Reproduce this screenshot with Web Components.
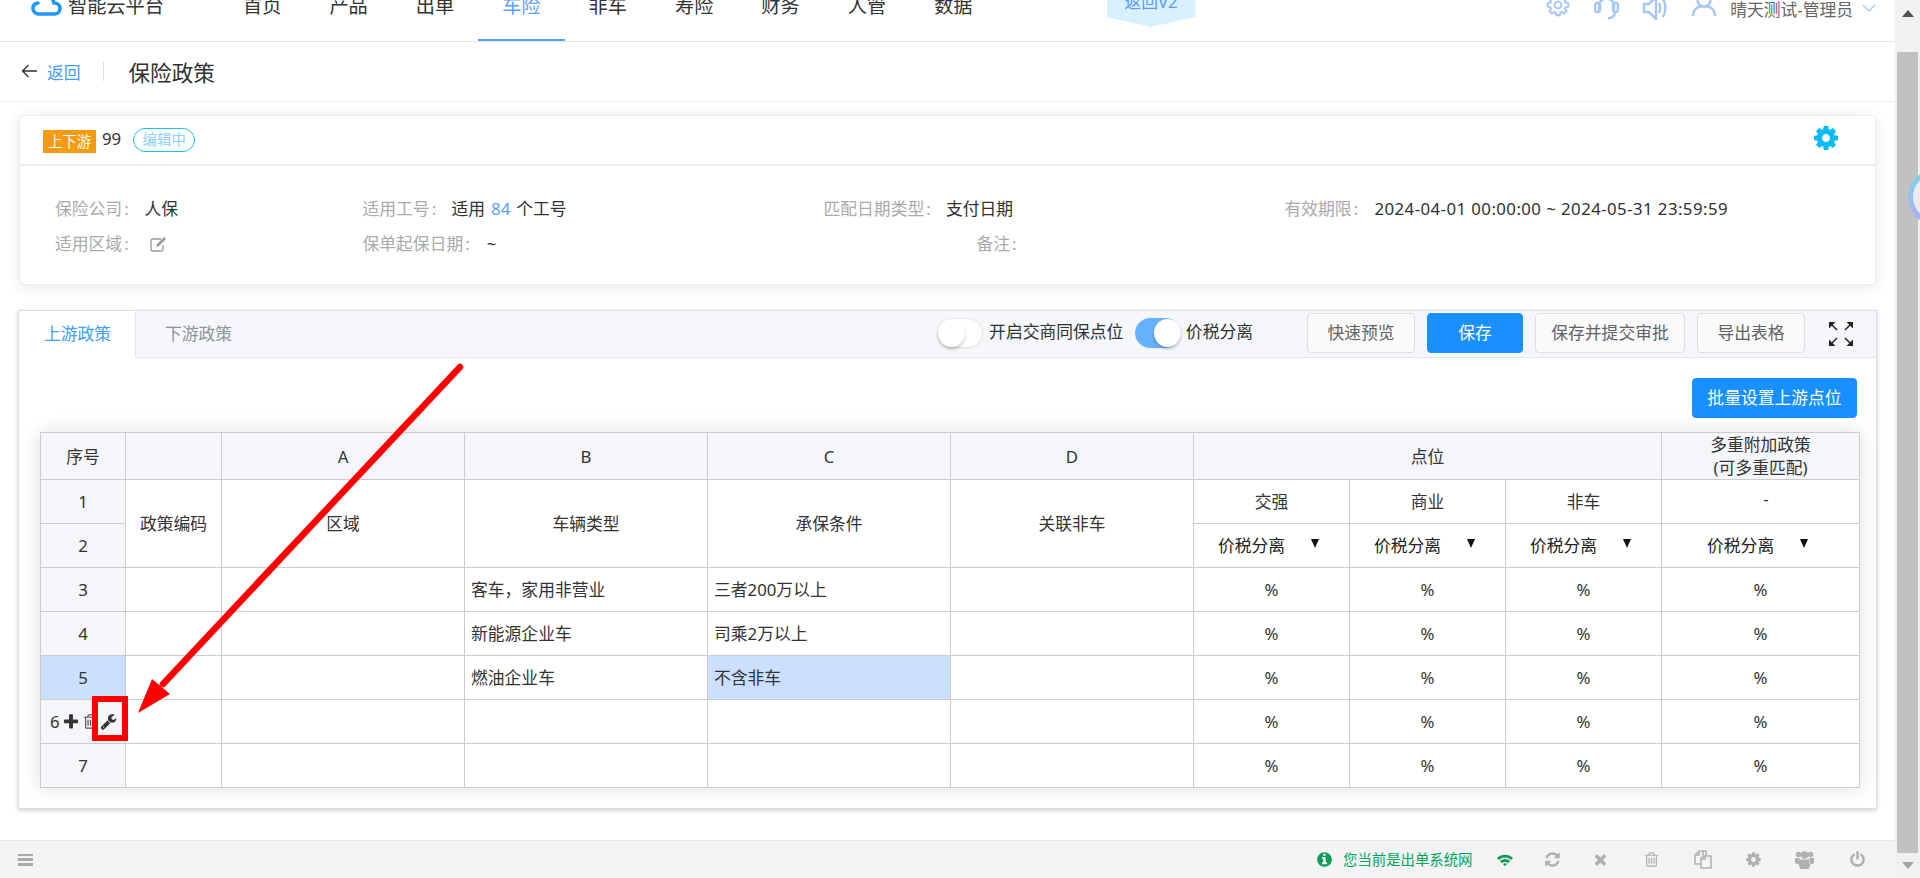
<!DOCTYPE html>
<html lang="zh"><head><meta charset="utf-8"><title>保险政策</title>
<style>
html,body{margin:0;padding:0;height:878px;overflow:hidden;background:#fff}
body{font:16.8px/1.4 "Noto Sans","Noto Sans CJK SC",sans-serif;color:#303133}
</style></head><body>
<app-shell>
  <top-nav></top-nav>
  <page-head title-text="保险政策"></page-head>
  <policy-card></policy-card>
  <tab-panel><policy-table></policy-table></tab-panel>
  <status-bar slot="foot"></status-bar>
</app-shell>
<fake-scroll></fake-scroll>
<red-note></red-note>
<script>
const FA={
wrench:"M448 1472q0-26-19-45t-45-19-45 19-19 45 19 45 45 19 45-19 19-45zm644-420l-682 682q-37 37-90 37-52 0-91-37l-106-108q-38-36-38-90 0-53 38-91l681-681q39 98 114.5 173.5t173.5 114.5zm634-435q0 39-23 106-47 134-164.5 217.5t-258.5 83.5q-185 0-316.5-131.5t-131.5-316.5 131.5-316.5 316.5-131.5q58 0 121.5 16.5t107.5 46.5q16 11 16 28t-16 28l-293 169v224l193 107q5-3 79-48.5t135.5-81 70.5-35.5q15 0 23.5 10t8.5 25z",
plus:"M1600 736v192q0 40-28 68t-68 28h-416v416q0 40-28 68t-68 28h-192q-40 0-68-28t-28-68v-416h-416q-40 0-68-28t-28-68v-192q0-40 28-68t68-28h416v-416q0-40 28-68t68-28h192q40 0 68 28t28 68v416h416q40 0 68 28t28 68z",
trash:"M704 736v576q0 14-9 23t-23 9h-64q-14 0-23-9t-9-23v-576q0-14 9-23t23-9h64q14 0 23 9t9 23zm256 0v576q0 14-9 23t-23 9h-64q-14 0-23-9t-9-23v-576q0-14 9-23t23-9h64q14 0 23 9t9 23zm256 0v576q0 14-9 23t-23 9h-64q-14 0-23-9t-9-23v-576q0-14 9-23t23-9h64q14 0 23 9t9 23zm128 724v-948h-896v948q0 22 7 40.5t14.5 27 10.5 8.5h832q3 0 10.5-8.5t14.5-27 7-40.5zm-672-1076h448l-48-117q-7-9-17-11h-317q-10 2-17 11zm928 32v64q0 14-9 23t-23 9h-96v948q0 83-47 143.5t-113 60.5h-832q-66 0-113-58.5t-47-141.5v-952h-96q-14 0-23-9t-9-23v-64q0-14 9-23t23-9h309l70-167q15-37 54-63t79-26h320q40 0 79 26t54 63l70 167h309q14 0 23 9t9 23z",
cog:"M1152 896q0-106-75-181t-181-75-181 75-75 181 75 181 181 75 181-75 75-181zm512-109v222q0 12-8 23t-20 13l-185 28q-19 54-39 91 35 50 107 138 10 12 10 25t-9 23q-27 37-99 108t-94 71q-12 0-26-9l-138-108q-44 23-91 38-16 136-29 186-7 28-36 28h-222q-14 0-24.5-8.5t-11.5-21.5l-28-184q-49-16-90-37l-141 107q-10 9-25 9-14 0-25-11-126-114-165-168-7-10-7-23 0-12 8-23 15-21 51-66.5t54-70.5q-27-50-41-99l-183-27q-13-2-21-12.5t-8-23.5v-222q0-12 8-23t19-13l186-28q14-46 39-92-40-57-107-138-10-12-10-24 0-10 9-23 26-36 98.5-107.5t94.5-71.5q13 0 26 10l138 107q44-23 91-38 16-136 29-186 7-28 36-28h222q14 0 24.5 8.5t11.5 21.5l28 184q49 16 90 37l142-107q9-9 24-9 13 0 25 10 129 119 165 170 7 8 7 22 0 12-8 23-15 21-51 66.5t-54 70.5q26 50 41 98l183 28q13 2 21 12.5t8 23.5z",
info:"M1152 1376v-160q0-14-9-23t-23-9h-96v-512q0-14-9-23t-23-9h-320q-14 0-23 9t-9 23v160q0 14 9 23t23 9h96v320h-96q-14 0-23 9t-9 23v160q0 14 9 23t23 9h448q14 0 23-9t9-23zm-128-896v-160q0-14-9-23t-23-9h-192q-14 0-23 9t-9 23v160q0 14 9 23t23 9h192q14 0 23-9t9-23zm640 416q0 209-103 385.5t-279.5 279.5-385.5 103-385.5-103-279.5-279.5-103-385.5 103-385.5 279.5-279.5 385.5-103 385.5 103 279.5 279.5 103 385.5z",
times:"M1490 1322q0 40-28 68l-136 136q-28 28-68 28t-68-28l-294-294-294 294q-28 28-68 28t-68-28l-136-136q-28-28-28-68t28-68l294-294-294-294q-28-28-28-68t28-68l136-136q28-28 68-28t68 28l294 294 294-294q28-28 68-28t68 28l136 136q28 28 28 68t-28 68l-294 294 294 294q28 28 28 68z",
refresh:"M1639 1056q0 5-1 7-64 268-268 434.5t-478 166.5q-146 0-282.5-55t-243.5-157l-129 129q-19 19-45 19t-45-19-19-45v-448q0-26 19-45t45-19h448q26 0 45 19t19 45-19 45l-137 137q71 66 161 102t187 36q134 0 250-65t186-179q11-17 53-117 8-23 30-23h192q13 0 22.5 9.5t9.5 22.5zm25-800v448q0 26-19 45t-45 19h-448q-26 0-45-19t-19-45 19-45l138-138q-148-137-349-137-134 0-250 65t-186 179q-11 17-53 117-8 23-30 23h-199q-13 0-22.5-9.5t-9.5-22.5v-7q65-268 270-434.5t480-166.5q146 0 284 55.5t245 156.5l130-129q19-19 45-19t45 19 19 45z",
power:"M1664 896q0 156-61 298t-164 245-245 164-298 61-298-61-245-164-164-245-61-298q0-182 80.5-343t226.5-270q43-32 95.5-25t83.5 50q32 42 24.5 94.5t-49.5 84.5q-98 74-151.5 181t-53.5 228q0 104 40.5 198.5t109.5 163.5 163.5 109.5 198.5 40.5 198.5-40.5 163.5-109.5 109.5-163.5 40.5-198.5q0-121-53.5-228t-151.5-181q-42-32-49.5-84.5t24.5-94.5q31-43 84-50t95 25q146 109 226.5 270t80.5 343zm-640-768v640q0 52-38 90t-90 38-90-38-38-90v-640q0-52 38-90t90-38 90 38 38 90z",
wifi:"M896 1523q-20 0-93-73.5t-73-93.5q0-32 62.5-54t103.5-22 103.5 22 62.5 54q0 20-73 93.5t-93 73.5zm270-271q-2 0-40-25t-101.5-50-128.5-25-128.5 25-101 50-40.5 25q-18 0-93.5-75t-75.5-93q0-13 10-23 78-77 196-121t233-44 233 44 196 121q10 10 10 23 0 18-75.5 93t-93.5 75zm273-272q-11 0-23-8-136-105-252-154.5t-268-49.5q-85 0-170.5 22t-149 53-113.5 62-79 53-31 22q-17 0-92-75t-75-93q0-12 10-22 132-132 320-205t380-73 380 73 320 205q10 10 10 22 0 18-75 93t-92 75z"
};
const fa=(n,s,c,extra='')=>`<svg width="${s}" height="${s}" viewBox="0 0 1792 1792" fill="${c}" style="flex:none;display:block;${extra}"><path d="${FA[n]}"/></svg>`;

function def(name,html,init){
  customElements.define(name,class extends HTMLElement{
    constructor(){super();const r=this.attachShadow({mode:'open'});r.innerHTML=typeof html==='function'?html(this):html;}
    connectedCallback(){if(init)init(this)}
  });
}

def('app-shell',`<style>
:host{display:flex;flex-direction:column;width:1895px;height:878px;box-sizing:border-box}
.foot{margin-top:auto}
</style><slot></slot><div class="foot"><slot name="foot"></slot></div>`);

const items=['首页','产品','出单','车险','非车','寿险','财务','人管','数据'];
def('top-nav',`<style>
:host{display:flex;height:42px;box-sizing:border-box;border-bottom:1px solid #e8e8e8;overflow:hidden;align-items:flex-start;color:#333;background:#fff}
.logo{display:flex;width:219px;box-sizing:border-box;padding-left:31px;flex:none}
.logo svg{margin:-6.500px 6px 0 0;display:block;flex:none}
.logo span{font-size:19.2px;line-height:16px;margin-top:-2px;white-space:nowrap}
.it{width:86.4px;height:41px;box-sizing:border-box;text-align:center;font-size:19.2px;line-height:16px;flex:none;white-space:nowrap}
.it span{display:block;margin-top:-2px}
.it.on{color:#5b9ffb;border-bottom:2px solid #5b9ffb}
.v2{flex:none;width:89px;height:27px;margin-left:110px;background:#d9f1ff;clip-path:polygon(0 0,100% 0,100% 17px,50% 27px,0 17px);color:#5a9cf8;font-size:16.8px;line-height:14px;text-align:center;overflow:hidden}
.v2 span{display:block;margin-top:-5px}
.r{margin-left:auto;display:flex;align-items:flex-start;padding-right:19px;flex:none}
.r svg{display:block;flex:none;fill:none;stroke:#a3c6fb;stroke-width:2.400}
.u{font-size:16.8px;line-height:18px;color:#666;white-space:nowrap;margin:1px 0 0 14px}
</style>
<div class="logo"><svg width="31" height="22" viewBox="0 0 31 22" fill="none" stroke="#2196f3" stroke-width="3.6" stroke-linecap="round"><path d="M15 2.500c4.500 0 7.500 3 8 6.500 3.500 0 6 2.500 6 5.500s-2.500 5.500-5.500 5.500H8c-3.500 0-6-2.500-6-5.500s2-5 5-5.500"/></svg><span>智能云平台</span></div>
${items.map((t,i)=>`<div class="it${i==3?' on':''}"><span>${t}</span></div>`).join('')}
<div class="v2"><span>返回V2</span></div>
<div class="r">
<svg width="24" height="24" viewBox="0 0 1792 1792" style="margin-top:-7px;stroke-width:140"><path d="${FA.cog}"/></svg>
<svg width="25" height="28" viewBox="0 0 25 28" style="margin:-8px 0 0 24px"><path d="M5 18V12a8 8 0 0 1 15 0v6"/><rect x="1" y="11" width="5" height="9" rx="2.500"/><rect x="19" y="11" width="5" height="9" rx="2.500"/><path d="M21 20c0 4-3 6-7 6.500"/></svg>
<svg width="25" height="28" viewBox="0 0 25 28" style="margin:-8px 0 0 23px"><path d="M2 12h5l7-7v22l-7-7H2z"/><path d="M17 11c1.500 3 1.500 7 0 10M21 7c3 5 3 13 0 18"/></svg>
<svg width="24" height="26" viewBox="0 0 24 26" style="margin:-9px 0 0 25px"><circle cx="12" cy="9" r="6.500"/><path d="M1 25c0-6 4-10 11-10s11 4 11 10"/></svg>
<span class="u">晴天测试-管理员</span>
<svg width="14" height="8" viewBox="0 0 14 8" style="margin:4px 0 0 9px;stroke-width:1.300"><path d="M1 1l6 6 6-6"/></svg>
</div>`);

def('page-head',h=>`<style>
:host{display:flex;align-items:center;height:60px;box-sizing:border-box;border-bottom:1px solid #ededed;background:#fff;padding-bottom:1px}
svg{display:block;margin-left:21px;margin-top:-1px}
a{color:#409eff;margin-left:9px;font-size:16.8px;line-height:24px;margin-top:4px;width:34px}
i{display:block;width:1px;height:19px;background:#dcdfe6;margin:0 24.500px 0 22px}
b{font-weight:400;font-size:21.6px;line-height:30px;color:#303133;margin-top:3px}
</style>
<svg width="17" height="14" viewBox="0 0 17 14" fill="none" stroke="#303133" stroke-width="1.300"><path d="M16 7H1.500M7.500 1L1.500 7l6 6"/></svg><a>返回</a><i></i><b>${h.getAttribute('title-text')}</b>`);

def('info-item',`<style>
:host{display:flex;align-items:center;height:35px;white-space:nowrap;font-size:16.8px}
.l{color:#aaa;width:var(--lw);flex:none}
.v{color:#303133;display:flex;align-items:center}
</style><span class="l"><slot name="l"></slot></span><span class="v"><slot></slot></span>`);

def('policy-card',`<style>
:host{display:block;margin:13px 19px 0 19px;height:170px;box-sizing:border-box;background:#fff;border:1px solid #ebeef5;border-radius:5px;box-shadow:0 2px 14px rgba(0,0,0,.1)}
.h{height:50px;box-sizing:border-box;border-bottom:2px solid #ebeef5;display:flex;align-items:center;padding:0 35px 0 23px}
.tag{background:#f59b11;color:#fff;font-size:14.4px;line-height:23px;width:53px;text-align:center;margin-top:2px}
.n{margin:0 12px 0 6px;font-size:16.8px;line-height:20px;margin-top:-3px}
.p{width:60px;height:22px;border:1px solid #1dc2e8;border-radius:12px;color:#8cd0f8;font-size:14.4px;line-height:22px;text-align:center}
.g{margin-left:auto;margin-top:-4px}
.b{display:grid;grid-template-columns:307.5px 461px 461px 1fr;padding:25px 0 0 35px}
.blue{color:#5b9ffb;margin:0 6px}
.ic{display:block;margin-left:5px}
.co{margin-left:2px}
</style>
<div class="h"><span class="tag">上下游</span><span class="n">99</span><span class="p">编辑中</span><span class="g">${fa('cog',28,'#0abcf6')}</span></div>
<div class="b">
<info-item style="--lw:89.5px"><span slot="l">保险公司<span class="co">:</span></span>人保</info-item>
<info-item style="--lw:89px"><span slot="l">适用工号<span class="co">:</span></span>适用<span class="blue">84</span>个工号</info-item>
<info-item style="--lw:122.5px"><span slot="l">匹配日期类型<span class="co">:</span></span>支付日期</info-item>
<info-item style="--lw:90px"><span slot="l">有效期限<span class="co">:</span></span><span style="letter-spacing:.44px">2024-04-01 00:00:00 ~ 2024-05-31 23:59:59</span></info-item>
<info-item style="--lw:90px"><span slot="l">适用区域<span class="co">:</span></span><svg class="ic" width="18" height="16" viewBox="0 0 18 16" fill="none" stroke="#999" stroke-width="1.300"><path d="M11 3H3a2 2 0 0 0-2 2v8a2 2 0 0 0 2 2h8a2 2 0 0 0 2-2V9"/><path d="M6 11l1-3 7-7 2 2-7 7z" fill="#999" stroke="none"/></svg></info-item>
<info-item style="--lw:124.3px"><span slot="l">保单起保日期<span class="co">:</span></span>~</info-item>
<info-item style="--lw:50px;padding-left:153px"><span slot="l">备注<span class="co">:</span></span></info-item>
<span></span>
</div>`);

def('x-btn',`<style>
:host{display:block;box-sizing:border-box;height:40px;border:1px solid #dcdfe6;border-radius:4px;background:#fafafa;color:#606266;font-size:16.8px;line-height:38px;text-align:center;flex:none}
:host([primary]){background:#1890ff;border-color:#1890ff;color:#fff}
</style><slot></slot>`);

def('x-switch',`<style>
:host{display:block;flex:none;width:46px;height:30px;box-sizing:border-box;border:1px solid #e6e6e6;border-radius:15px;background:#fff;position:relative;box-shadow:0 1px 2px rgba(0,0,0,.05)}
:host([on]){background:#66b1ff;border-color:#66b1ff}
i{display:block;width:27px;height:28px;margin:0;border-radius:50%;background:#fff;box-shadow:0 2px 3px rgba(0,0,0,.22)}
:host([on]) i{margin-left:18px}
</style><i></i>`);

def('tab-panel',`<style>
:host{display:block;margin:25px 18px 0 18px;height:499px;box-sizing:border-box;border:1px solid #dcdfe6;background:#fff;box-shadow:0 2px 4px rgba(0,0,0,.14),0 0 6px rgba(0,0,0,.05)}
.bar{display:flex;align-items:center;height:47px;box-sizing:border-box;background:#f5f7fa;border-bottom:1px solid #e4e7ed;font-size:16.8px}
.t{height:47px;line-height:46px;box-sizing:border-box;white-space:nowrap;flex:none}
.t.a{width:117px;padding-left:25px;background:#fff;color:#409eff;border-right:1px solid #e4e7ed}
.t.b{width:120px;padding-left:29px;color:#909399;height:46px}
.tools{margin-left:auto;display:flex;align-items:center;padding-right:23px;margin-top:-2px}
.lb{color:#303133;white-space:nowrap;margin-left:4.5px;line-height:24px;margin-top:-3px}
svg.fs{display:block;margin-left:24px;flex:none;margin-top:1px}
.body{padding:20px 0 0 21px}
.row{display:flex;justify-content:flex-end;padding-right:19px;margin-bottom:14px}
</style>
<div class="bar"><div class="t a">上游政策</div><div class="t b">下游政策</div>
<div class="tools"><x-switch></x-switch><span class="lb" style="margin-left:6px">开启交商同保点位</span><x-switch on style="margin-left:12px"></x-switch><span class="lb">价税分离</span>
<x-btn style="width:108px;margin-left:54px">快速预览</x-btn><x-btn primary style="width:96px;margin-left:12px">保存</x-btn><x-btn style="width:150px;margin-left:12px">保存并提交审批</x-btn><x-btn style="width:108px;margin-left:12px">导出表格</x-btn>
<svg class="fs" width="24" height="24" viewBox="0 0 24 24" fill="#222" stroke="#222" stroke-width="0"><path d="M0 0h6.500L0 6.500zM24 0h-6.500L24 6.500zM0 24h6.500L0 17.500zM24 24h-6.500L24 17.500z"/><path d="M3 3l5 5M21 3l-5 5M3 21l5-5M21 21l-5-5" stroke-width="1.500" fill="none"/></svg>
</div></div>
<div class="body"><div class="row"><x-btn primary style="width:165px">批量设置上游点位</x-btn></div><slot></slot></div>`);

const W=[85,96,243,243,243,243,156,156,156,198];
const sel=(pad,gap)=>`<div class="sel" style="padding-left:${pad}px"><span>价税分离</span><i style="margin-left:${gap}px"></i></div>`;
const pct=`<td class="c">%</td><td class="c">%</td><td class="c">%</td><td class="c">%</td>`;
const rows=[['3','客车，家用非营业','三者200万以上'],['4','新能源企业车','司乘2万以上'],['5','燃油企业车','不含非车'],['6','',''],['7','','']];
def('policy-table',`<style>
:host{display:block;width:1820px;box-shadow:0 0 18px rgba(0,0,0,.13)}
table{border-collapse:separate;border-spacing:0;table-layout:fixed;width:1820px;border-top:1px solid #ccc;border-left:1px solid #ccc;font-size:16.8px;color:#333}
td,th{box-sizing:border-box;height:44px;padding:0;border-right:1px solid #ccc;border-bottom:1px solid #ccc;font-weight:400;background:#fff;white-space:nowrap;overflow:hidden}
tr.hd td{height:46px;background:#f5f6fa;text-align:center;line-height:23px;white-space:normal}
.n{background:#f5f6fa;text-align:center}
.c{text-align:center}
.txt{padding-left:6px}
.sel{display:flex;align-items:center;height:100%;color:#222;padding-top:1px;box-sizing:border-box}
.sel i{display:block;width:0;height:0;border:4px solid transparent;border-top:9px solid #111;border-bottom:0;margin-top:-5px}
.s{background:#cae0fe}
.tools{display:flex;align-items:center;padding-left:9px;height:100%}
.dash{display:inline-block;padding:0 0 5px 11px}
</style>
<table><colgroup>${W.map(w=>`<col style="width:${w}px">`).join('')}</colgroup>
<tr class="hd"><td>序号</td><td></td><td>A</td><td>B</td><td>C</td><td>D</td><td colspan="3">点位</td><td>多重附加政策<br>(可多重匹配)</td></tr>
<tr><td class="n">1</td><td class="c" rowspan="2">政策编码</td><td class="c" rowspan="2">区域</td><td class="c" rowspan="2">车辆类型</td><td class="c" rowspan="2">承保条件</td><td class="c" rowspan="2">关联非车</td><td class="c">交强</td><td class="c">商业</td><td class="c">非车</td><td class="c"><span class="dash">-</span></td></tr>
<tr><td class="n">2</td><td>${sel(24,26)}</td><td>${sel(24,26)}</td><td>${sel(24,26)}</td><td>${sel(45,26)}</td></tr>
${rows.map(r=>`<tr><td class="n${r[0]=='5'?' s':''}">${r[0]=='6'?`<div class="tools"><span>6</span><span style="margin:0 0 0 2.400px">${fa('plus',18,'#333')}</span><span style="margin-left:2px">${fa('trash',17,'#555')}</span><span style="margin-left:1.400px">${fa('wrench',17,'#333')}</span></div>`:r[0]}</td><td></td><td></td><td class="txt">${r[1]}</td><td class="txt${r[0]=='5'?' s':''}">${r[2]}</td><td></td>${pct}</tr>`).join('')}
</table>`);

const grp=`<svg width="19" height="18" viewBox="0 0 19 18" fill="#b0b0b0" style="flex:none;display:block"><circle cx="3.500" cy="3.500" r="2.800"/><circle cx="15.500" cy="3.500" r="2.800"/><circle cx="9.500" cy="4" r="3.800"/><path d="M0 7h4.500l.3 6H1.500L0 11.500zM19 7h-4.500l-.3 6h3.300l1.500-1.500zM4.500 8.500h10l.8 5.500-1.800 4h-8L3.700 14z"/></svg>`;
const copy=`<svg width="18" height="19" viewBox="0 0 18 19" fill="none" stroke="#b0b0b0" stroke-width="1.500" style="flex:none;display:block"><path d="M7 14H1V5l4-4h4v5"/><path d="M9 1h3v5"/><path d="M7 18V8l4-2h6v12z"/><path d="M7 9h4V6"/><path d="M1 5h4V1"/></svg>`;
def('status-bar',`<style>
:host{display:flex;align-items:center;height:38px;box-sizing:border-box;background:#f4f4f4;border-top:1px solid #e8e8e8}
.m{margin-left:18px;width:15px;height:12px;flex:none;display:flex;flex-direction:column;justify-content:space-between}
.m i{display:block;height:2.500px;background:#aaa}
.r{margin-left:auto;display:flex;align-items:center;padding-right:29px}
.t{color:#00a65a;font-size:14.4px;margin-left:10px;line-height:20px;white-space:nowrap}
.a{display:block;flex:none}
</style>
<div class="m"><i></i><i></i><i></i></div>
<div class="r">${fa('info',17,'#0e9d58')}<span class="t">您当前是出单系统网</span>
<span class="a" style="margin-left:22px">${fa('wifi',20,'#0e9d58','margin-top:-1px')}</span>
<span class="a" style="margin-left:29px">${fa('refresh',17,'#b0b0b0')}</span>
<span class="a" style="margin-left:31.700px">${fa('times',17,'#b0b0b0')}</span>
<span class="a" style="margin-left:33.800px">${fa('trash',17,'#b0b0b0')}</span>
<span class="a" style="margin-left:34px">${copy}</span>
<span class="a" style="margin-left:33px">${fa('cog',17,'#b0b0b0')}</span>
<span class="a" style="margin-left:33px">${grp}</span>
<span class="a" style="margin-left:35px">${fa('power',17,'#b0b0b0')}</span>
</div>`);

def('fake-scroll',`<style>
:host{position:fixed;left:1895px;top:0;width:25px;height:878px;background:#f1f1f1;display:flex;flex-direction:column;align-items:center}
.up,.dn{width:0;height:0;border:6px solid transparent;flex:none}
.up{border-bottom:7px solid #505050;border-top:0;margin-top:10px}
.th{width:21px;height:801px;background:#c1c1c1;margin-top:35px;flex:none}
.dn{border-top:7px solid #a3a3a3;border-bottom:0;margin-top:9px}
</style><i class="up"></i><div class="th"></div><i class="dn"></i>`);

def('red-note',`<style>
:host{position:fixed;left:0;top:0;width:1920px;height:878px;pointer-events:none;display:block}
svg{display:block}
</style>
<svg width="1920" height="878" viewBox="0 0 1920 878">
<defs><linearGradient id="g" x1="0" y1="0" x2="0" y2="1"><stop offset="0" stop-color="#7fd3e6"/><stop offset="1" stop-color="#adaef0"/></linearGradient></defs>
<circle cx="1936" cy="197" r="25.500" fill="#ececec" stroke="url(#g)" stroke-width="5"/>
<line x1="460" y1="367" x2="163" y2="684" stroke="#f00" stroke-width="6.500" stroke-linecap="round"/>
<polygon points="138,713 152,679 170,694" fill="#f00"/>
<rect x="95" y="699" width="30" height="39" fill="none" stroke="#f00" stroke-width="6"/>
</svg>`);
</script>
</body></html>
